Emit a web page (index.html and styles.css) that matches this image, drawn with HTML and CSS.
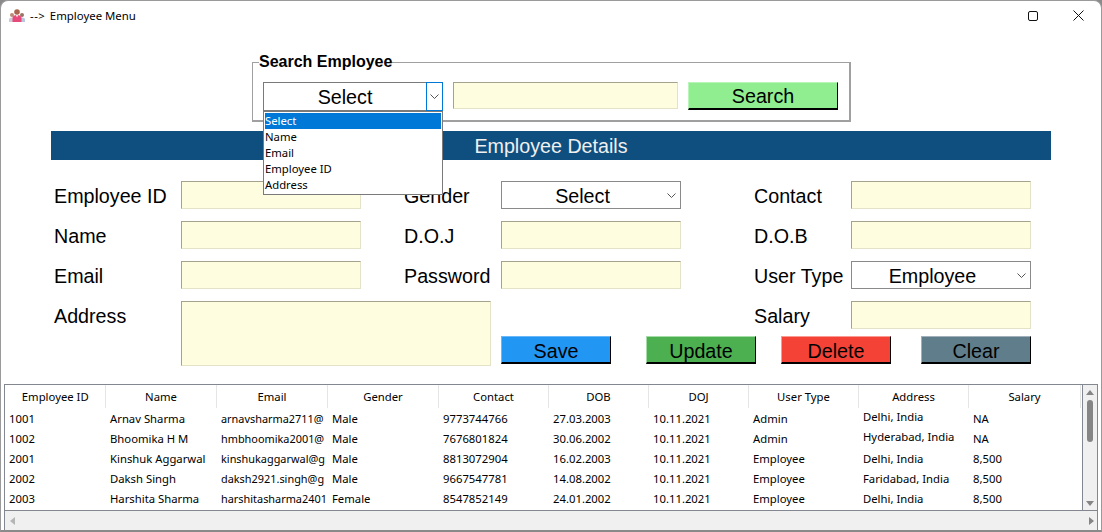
FILE: index.html
```html
<!DOCTYPE html>
<html lang="en">
<head>
    <meta charset="UTF-8">
    <title>Employee Menu</title>
    <link rel="stylesheet" href="styles.css">
</head>
<body>
    <div class="window">
        <!-- Title bar -->
        <div class="titlebar">
            <svg class="app-icon" width="16" height="16" viewBox="0 0 16 16">
                <circle cx="3" cy="7" r="2" fill="#b98a72"/>
                <circle cx="13" cy="7" r="2" fill="#9a7462"/>
                <path d="M0 14v-2.500q0-2 3-2t3 2V14z" fill="#c9cdd6"/>
                <path d="M10 14v-2.500q0-2 3-2t3 2V14z" fill="#b9c6dc"/>
                <circle cx="8" cy="4" r="2.800" fill="#a8644c"/>
                <path d="M3.500 14v-4q0-3 4.500-3t4.500 3v4z" fill="#e8487a"/>
                <path d="M7 7h2l-1 2.500z" fill="#fff"/>
            </svg>
            <span class="title-text"><span class="title-arrow">--&gt;</span> Employee Menu</span>
            <div class="win-controls">
                <svg width="10" height="10" viewBox="0 0 10 10"><rect x="0.500" y="0.500" width="9" height="9" rx="1.500" fill="none" stroke="#111"/></svg>
                <svg width="11" height="11" viewBox="0 0 11 11"><path d="M0.500 0.500l10 10M10.500 0.500l-10 10" stroke="#111" fill="none"/></svg>
            </div>
        </div>

        <!-- Search -->
        <fieldset class="search-box">
            <legend>Search Employee</legend>
            <div class="combo focused">
                <span class="combo-value">Select</span>
                <span class="combo-arrow"><svg width="9" height="5" viewBox="0 0 9 5"><path d="M0.500 0.500l4 4 4-4" fill="none" stroke="#555"/></svg></span>
            </div>
            <div class="field search-field"></div>
            <div class="btn btn-search">Search</div>
            <ul class="dropdown">
                <li class="selected">Select</li>
                <li>Name</li>
                <li>Email</li>
                <li>Employee ID</li>
                <li>Address</li>
            </ul>
        </fieldset>

        <div class="section-title">Employee Details</div>

        <!-- Form -->
        <div class="form-grid">
            <label>Employee ID</label>
            <div class="field"></div>
            <label class="col2">Gender</label>
            <div class="combo plain"><span class="combo-value">Select</span><span class="combo-arrow"><svg width="9" height="5" viewBox="0 0 9 5"><path d="M0.500 0.500l4 4 4-4" fill="none" stroke="#555"/></svg></span></div>
            <label class="col3">Contact</label>
            <div class="field"></div>

            <label>Name</label>
            <div class="field"></div>
            <label class="col2">D.O.J</label>
            <div class="field"></div>
            <label class="col3">D.O.B</label>
            <div class="field"></div>

            <label>Email</label>
            <div class="field"></div>
            <label class="col2">Password</label>
            <div class="field"></div>
            <label class="col3">User Type</label>
            <div class="combo plain"><span class="combo-value">Employee</span><span class="combo-arrow"><svg width="9" height="5" viewBox="0 0 9 5"><path d="M0.500 0.500l4 4 4-4" fill="none" stroke="#555"/></svg></span></div>

            <label class="address-label">Address</label>
            <div class="field address"></div>
            <label class="col3 salary-label">Salary</label>
            <div class="field salary"></div>

            <div class="actions">
                <div class="btn btn-save">Save</div>
                <div class="btn btn-update">Update</div>
                <div class="btn btn-delete">Delete</div>
                <div class="btn btn-clear">Clear</div>
            </div>
        </div>

        <!-- Employee table -->
        <div class="table-frame">
            <div class="table-row">
                <div class="table-view">
                    <table>
                        <thead>
                            <tr>
                                <th class="w100">Employee ID</th>
                                <th class="w111">Name</th>
                                <th class="w111">Email</th>
                                <th class="w111">Gender</th>
                                <th class="w110">Contact</th>
                                <th class="w100">DOB</th>
                                <th class="w100">DOJ</th>
                                <th class="w110">User Type</th>
                                <th class="w110">Address</th>
                                <th class="w112">Salary</th>
                            </tr>
                        </thead>
                        <tbody>
                            <tr><td>1001</td><td>Arnav Sharma</td><td class="email">arnavsharma2711@</td><td>Male</td><td>9773744766</td><td>27.03.2003</td><td>10.11.2021</td><td>Admin</td><td class="addr">Delhi, India</td><td>NA</td></tr>
                            <tr><td>1002</td><td>Bhoomika H M</td><td class="email">hmbhoomika2001@</td><td>Male</td><td>7676801824</td><td>30.06.2002</td><td>10.11.2021</td><td>Admin</td><td class="addr">Hyderabad, India</td><td>NA</td></tr>
                            <tr><td>2001</td><td>Kinshuk Aggarwal</td><td class="email">kinshukaggarwal@g</td><td>Male</td><td>8813072904</td><td>16.02.2003</td><td>10.11.2021</td><td>Employee</td><td>Delhi, India</td><td>8,500</td></tr>
                            <tr><td>2002</td><td>Daksh Singh</td><td class="email">daksh2921.singh@g</td><td>Male</td><td>9667547781</td><td>14.08.2002</td><td>10.11.2021</td><td>Employee</td><td>Faridabad, India</td><td>8,500</td></tr>
                            <tr><td>2003</td><td>Harshita Sharma</td><td class="email">harshitasharma2401</td><td>Female</td><td>8547852149</td><td>24.01.2002</td><td>10.11.2021</td><td>Employee</td><td>Delhi, India</td><td>8,500</td></tr>
                        </tbody>
                    </table>
                </div>
                <div class="vscroll">
                    <span class="tri tri-up"></span>
                    <span class="thumb"></span>
                    <span class="tri tri-down"></span>
                </div>
            </div>
            <div class="hscroll">
                <span class="tri tri-left"></span>
                <span class="tri tri-right"></span>
            </div>
        </div>
    </div>
</body>
</html>
```

FILE: styles.css
```css
html, body {
    margin: 0;
    padding: 0;
    height: 532px;
    overflow: hidden;
    background-color: #8a8a8a;
}

.window {
    position: relative;
    box-sizing: border-box;
    width: 1102px;
    height: 532px;
    background-color: white;
    border: 1px solid #9a9a9a;
    border-bottom: 2px solid #8a8a8a;
    border-radius: 8px 8px 0 0;
    font-family: "Liberation Sans", Arial, sans-serif;
    color: black;
}

/* Title bar */
.titlebar {
    display: flex;
    align-items: center;
    height: 29px;
    padding-left: 8px;
    font-family: "Noto Sans", sans-serif;
    font-size: 11.400px;
}

.title-arrow {
    letter-spacing: 0.500px;
    margin-right: 1.500px;
}

.app-icon {
    margin-right: 5px;
}

.win-controls {
    display: flex;
    align-items: center;
    gap: 35px;
    margin-left: auto;
    padding-right: 17px;
}

/* Search group */
.search-box {
    position: relative;
    display: flex;
    align-items: flex-start;
    box-sizing: border-box;
    width: 599px;
    height: 70px;
    margin: 22px 0 0 251px;
    padding: 10px 0 0 10px;
    border: 1px solid #a0a0a0;
    border-bottom-width: 2px;
    border-right-width: 2px;
}

.search-box legend {
    padding: 0;
    margin-left: -4px;
    font-size: 16px;
    font-weight: bold;
    line-height: 20px;
}

.combo {
    display: flex;
    box-sizing: border-box;
    width: 180px;
    height: 29px;
    border: 1px solid #7a7a7a;
    background-color: white;
    font-size: 19.700px;
}

.combo-value {
    flex: 1;
    line-height: 29px;
    text-align: center;
}

.combo-arrow {
    display: flex;
    align-items: center;
    justify-content: center;
    width: 17px;
}

.combo.focused {
    border-right: none;
}

.combo.focused .combo-arrow {
    box-sizing: border-box;
    border: 1px solid #0078d7;
    margin: -1px 0;
    width: 17px;
    height: 29px;
}

.combo.plain {
    border-color: #8a8a8a;
}

.combo.plain .combo-value {
    line-height: 28px;
}

.field {
    box-sizing: border-box;
    width: 180px;
    height: 27px;
    background-color: #fffde0;
    border: 1px solid #e4e3c8;
    border-top-color: #a3a38e;
    border-left-color: #a3a38e;
}

.search-field {
    width: 225px;
    margin-left: 10px;
}

.btn {
    box-sizing: border-box;
    height: 28px;
    text-align: center;
    font-size: 19.700px;
    line-height: 27px;
    border: 1px solid;
    border-right: 1px solid black;
    border-bottom: 2px solid black;
}

.btn-search {
    width: 150px;
    margin-left: 10px;
    background-color: #90ee90;
    border-top-color: #b8f5b8;
    border-left-color: #b8f5b8;
    border-right-color: black;
    border-bottom-color: black;
}

.dropdown {
    position: absolute;
    left: 10px;
    top: 39px;
    box-sizing: border-box;
    width: 180px;
    height: 84px;
    margin: 0;
    padding: 1px;
    list-style: none;
    background-color: white;
    border: 1px solid #7a7a7a;
    font-family: "Noto Sans", sans-serif;
    font-size: 11.300px;
    line-height: 16px;
    z-index: 2;
}

.dropdown li {
    height: 16px;
}

.dropdown .selected {
    background-color: #0078d7;
    color: white;
}

/* Section header */
.section-title {
    width: 1000px;
    height: 29px;
    margin: 9px 0 0 50px;
    background-color: #0f4f7f;
    color: #f0f0f0;
    font-size: 19.700px;
    line-height: 30px;
    text-align: center;
}

/* Form */
.form-grid {
    display: grid;
    grid-template-columns: 127px 180px 43px 97px 180px 73px 97px 180px;
    grid-template-rows: repeat(3, 40px) 35px 30px;
    align-items: start;
    margin: 21px 0 0 53px;
    font-size: 19.700px;
}

.form-grid label {
    grid-column: 1;
    line-height: 31px;
}

.form-grid .col2 {
    grid-column: 4;
}

.form-grid .col3 {
    grid-column: 7;
}

.form-grid .field,
.form-grid .combo {
    height: 28px;
}

.form-grid .address-label {
    grid-row: 4;
}

.form-grid .address {
    grid-row: 4 / span 2;
    grid-column: 2 / span 3;
    width: 310px;
    height: 65px;
}

.form-grid .salary-label {
    grid-row: 4;
}

.form-grid .salary {
    grid-row: 4;
    grid-column: 8;
}

.actions {
    grid-row: 5;
    grid-column: 5 / span 4;
    display: flex;
}

.actions .btn {
    width: 110px;
    line-height: 29px;
}

.btn-save {
    background-color: #2196f3;
    border-top-color: #6ab8f7;
    border-left-color: #6ab8f7;
}

.actions .btn-update {
    margin-left: 35px;
    background-color: #4caf50;
    border-top-color: #a5dca7;
    border-left-color: #a5dca7;
}

.actions .btn-delete {
    margin-left: 25px;
    background-color: #f44336;
    border-top-color: #f99a93;
    border-left-color: #f99a93;
}

.actions .btn-clear {
    margin-left: 30px;
    background-color: #607d8b;
    border-top-color: #a0b1b9;
    border-left-color: #a0b1b9;
}

/* Table */
.table-frame {
    position: absolute;
    left: 3px;
    top: 383px;
    box-sizing: border-box;
    width: 1094px;
    height: 146px;
    border: 1px solid #828790;
    border-bottom: none;
    background-color: #f0f0f0;
}

.table-row {
    display: flex;
    height: 126px;
    border-bottom: 1px solid #828790;
    box-sizing: border-box;
}

.table-view {
    width: 1077px;
    overflow: hidden;
    background-color: white;
    border-right: 1px solid #828790;
}

table {
    border-collapse: collapse;
    table-layout: fixed;
    width: 1075px;
    font-family: "Noto Sans", sans-serif;
    font-size: 11.300px;
}

th {
    box-sizing: border-box;
    height: 23px;
    padding: 0 0 0 1px;
    font-weight: normal;
    border-right: 1px solid #e5e5e5;
    vertical-align: middle;
}

td {
    box-sizing: border-box;
    height: 20px;
    padding: 0 2px 0 5px;
    white-space: nowrap;
    overflow: hidden;
    vertical-align: middle;
}

td.email {
    font-size: 10.900px;
}

td:first-child {
    padding-left: 4px;
}

.addr {
    padding-bottom: 4px;
}

.w100 { width: 100px; }
.w110 { width: 110px; }
.w111 { width: 111px; }
.w112 { width: 112px; }

.vscroll {
    flex: 1;
    display: flex;
    flex-direction: column;
    align-items: center;
}

.thumb {
    width: 6px;
    height: 42px;
    margin-top: 5px;
    border-radius: 3px;
    background-color: #858585;
}

.tri {
    width: 0;
    height: 0;
    border: 4px solid transparent;
}

.tri-up {
    border-top: none;
    border-bottom: 5px solid #858585;
    margin-top: 5px;
}

.tri-down {
    margin-top: auto;
    margin-bottom: 4px;
    border-bottom: none;
    border-top: 5px solid #858585;
}

.hscroll {
    display: flex;
    align-items: center;
    justify-content: space-between;
    height: 19px;
    padding: 0 3px 0 5px;
}

.tri-left {
    border-left: none;
    border-right: 5px solid #b5b5b5;
}

.tri-right {
    border-right: none;
    border-left: 5px solid #858585;
}
```
